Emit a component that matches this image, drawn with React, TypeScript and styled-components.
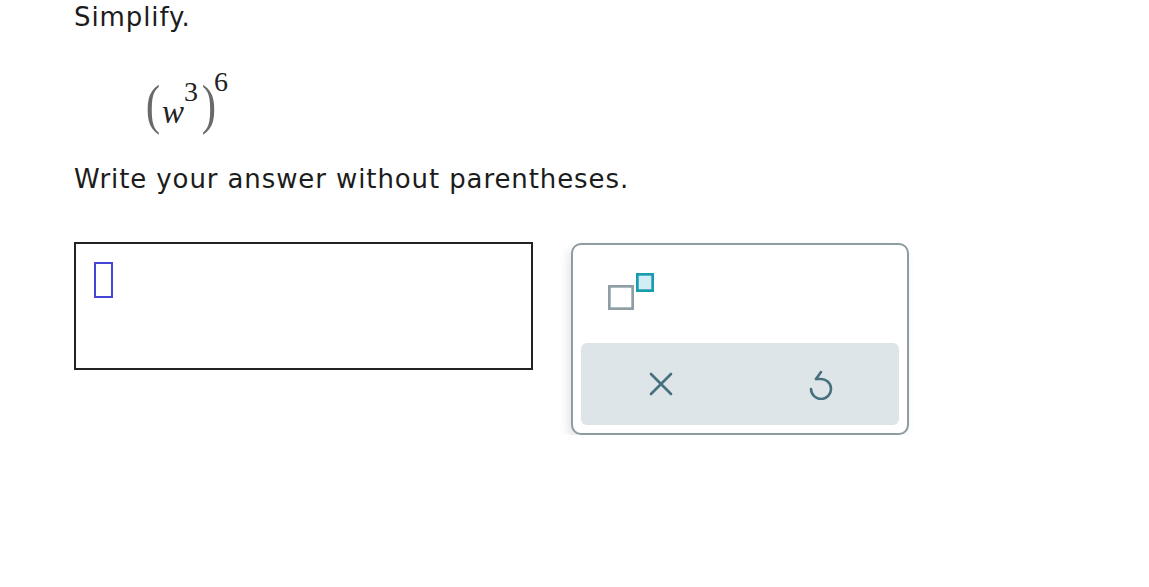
import React from "react";
import styled, { createGlobalStyle } from "styled-components";

const Global = createGlobalStyle`
  html, body { margin: 0; padding: 0; background: #ffffff; }
  body {
    font-family: "DejaVu Sans", Verdana, sans-serif;
    color: #1c1c1c;
  }
`;

const Page = styled.div`
  padding: 2px 0 0 74px;
`;

const Title = styled.p`
  margin: 0;
  font-size: 26px;
  line-height: 30px;
  letter-spacing: 0.9px;
`;

const MathBlock = styled.div`
  margin: 44px 0 0 70px;
  height: 59px;
  font-family: "Liberation Serif", "Times New Roman", serif;
  font-size: 50px;
  line-height: 60px;
  color: #222;
`;

const Paren = styled.span<{ $gap?: number }>`
  display: inline-block;
  font-size: 54px;
  line-height: 0;
  color: #6a6a6a;
  transform: scaleX(0.8);
  margin-left: ${(p) => p.$gap ?? 0}px;
`;

const Base = styled.span`
  font-size: 33px;
  font-style: italic;
  line-height: 0;
  margin-left: 0px;
`;

const Sup = styled.span<{ $raise: number; $gap: number }>`
  font-size: 28px;
  line-height: 0;
  vertical-align: ${(p) => p.$raise}px;
  margin-left: ${(p) => p.$gap}px;
`;

const Prompt = styled.p`
  margin: 29px 0 0 0;
  font-size: 26px;
  line-height: 30px;
  letter-spacing: 0.9px;
`;

const AnswerRow = styled.div`
  display: flex;
  align-items: flex-start;
  gap: 39px;
  margin-top: 48px;
`;

const InputBox = styled.div`
  box-sizing: border-box;
  width: 459px;
  height: 128px;
  border: 2px solid #222;
  padding: 18px;
`;

const Caret = styled.div`
  box-sizing: border-box;
  width: 19px;
  height: 36px;
  border: 2px solid #4444d6;
`;

const Keypad = styled.div`
  box-sizing: border-box;
  width: 338px;
  height: 192px;
  margin-top: 1px;
  margin-left: -1px;
  border: 2px solid #8e9ca2;
  border-radius: 10px;
  padding: 8px;
  display: flex;
  flex-direction: column;
  box-shadow: -3px 5px 10px rgba(60, 80, 90, 0.14);
  background: #fff;
`;

const KeyRow = styled.div`
  height: 90px;
  box-sizing: border-box;
  padding: 20px 0 0 27px;
`;

const KeyButton = styled.button`
  border: 0;
  background: transparent;
  padding: 0;
  display: flex;
  align-items: center;
  justify-content: center;
  cursor: pointer;
`;

const ActionBar = styled.div`
  height: 82px;
  background: #dde5e8;
  border-radius: 6px;
  display: grid;
  grid-template-columns: 1fr 1fr;
  align-items: center;
  justify-items: center;
`;

const SuperscriptIcon = () => (
  <svg width="47" height="38" viewBox="0 0 47 38">
    <rect x="1.35" y="13.35" width="23.3" height="22.3" fill="none" stroke="#8e9ea4" strokeWidth="2.7" />
    <rect x="29.35" y="1.35" width="15.3" height="16.3" fill="#d2eef4" stroke="#1a9cb0" strokeWidth="2.7" />
  </svg>
);

const ClearIcon = () => (
  <svg width="24" height="24" viewBox="0 0 24 24">
    <path d="M2 2 L22 22 M22 2 L2 22" stroke="#47707f" strokeWidth="2.6" strokeLinecap="round" fill="none" />
  </svg>
);

const ResetIcon = () => (
  <svg width="26" height="32" viewBox="0 0 26 32">
    <path
      d="M4 21 A10 10 0 1 0 13 11 L9 11"
      stroke="#47707f"
      strokeWidth="2.6"
      strokeLinecap="round"
      strokeLinejoin="round"
      fill="none"
    />
    <path
      d="M14 4 L9 11"
      stroke="#47707f"
      strokeWidth="2.6"
      strokeLinecap="round"
      fill="none"
    />
  </svg>
);

export default function App() {
  return (
    <>
      <Global />
      <Page>
        <Title>Simplify.</Title>
        <MathBlock>
          <Paren>(</Paren>
          <Base>w</Base>
          <Sup $raise={22} $gap={0}>3</Sup>
          <Paren $gap={2}>)</Paren>
          <Sup $raise={32} $gap={-4}>6</Sup>
        </MathBlock>
        <Prompt>Write your answer without parentheses.</Prompt>
        <AnswerRow>
          <InputBox>
            <Caret />
          </InputBox>
          <Keypad>
            <KeyRow>
              <KeyButton aria-label="superscript">
                <SuperscriptIcon />
              </KeyButton>
            </KeyRow>
            <ActionBar>
              <KeyButton aria-label="clear">
                <ClearIcon />
              </KeyButton>
              <KeyButton aria-label="reset">
                <ResetIcon />
              </KeyButton>
            </ActionBar>
          </Keypad>
        </AnswerRow>
      </Page>
    </>
  );
}
